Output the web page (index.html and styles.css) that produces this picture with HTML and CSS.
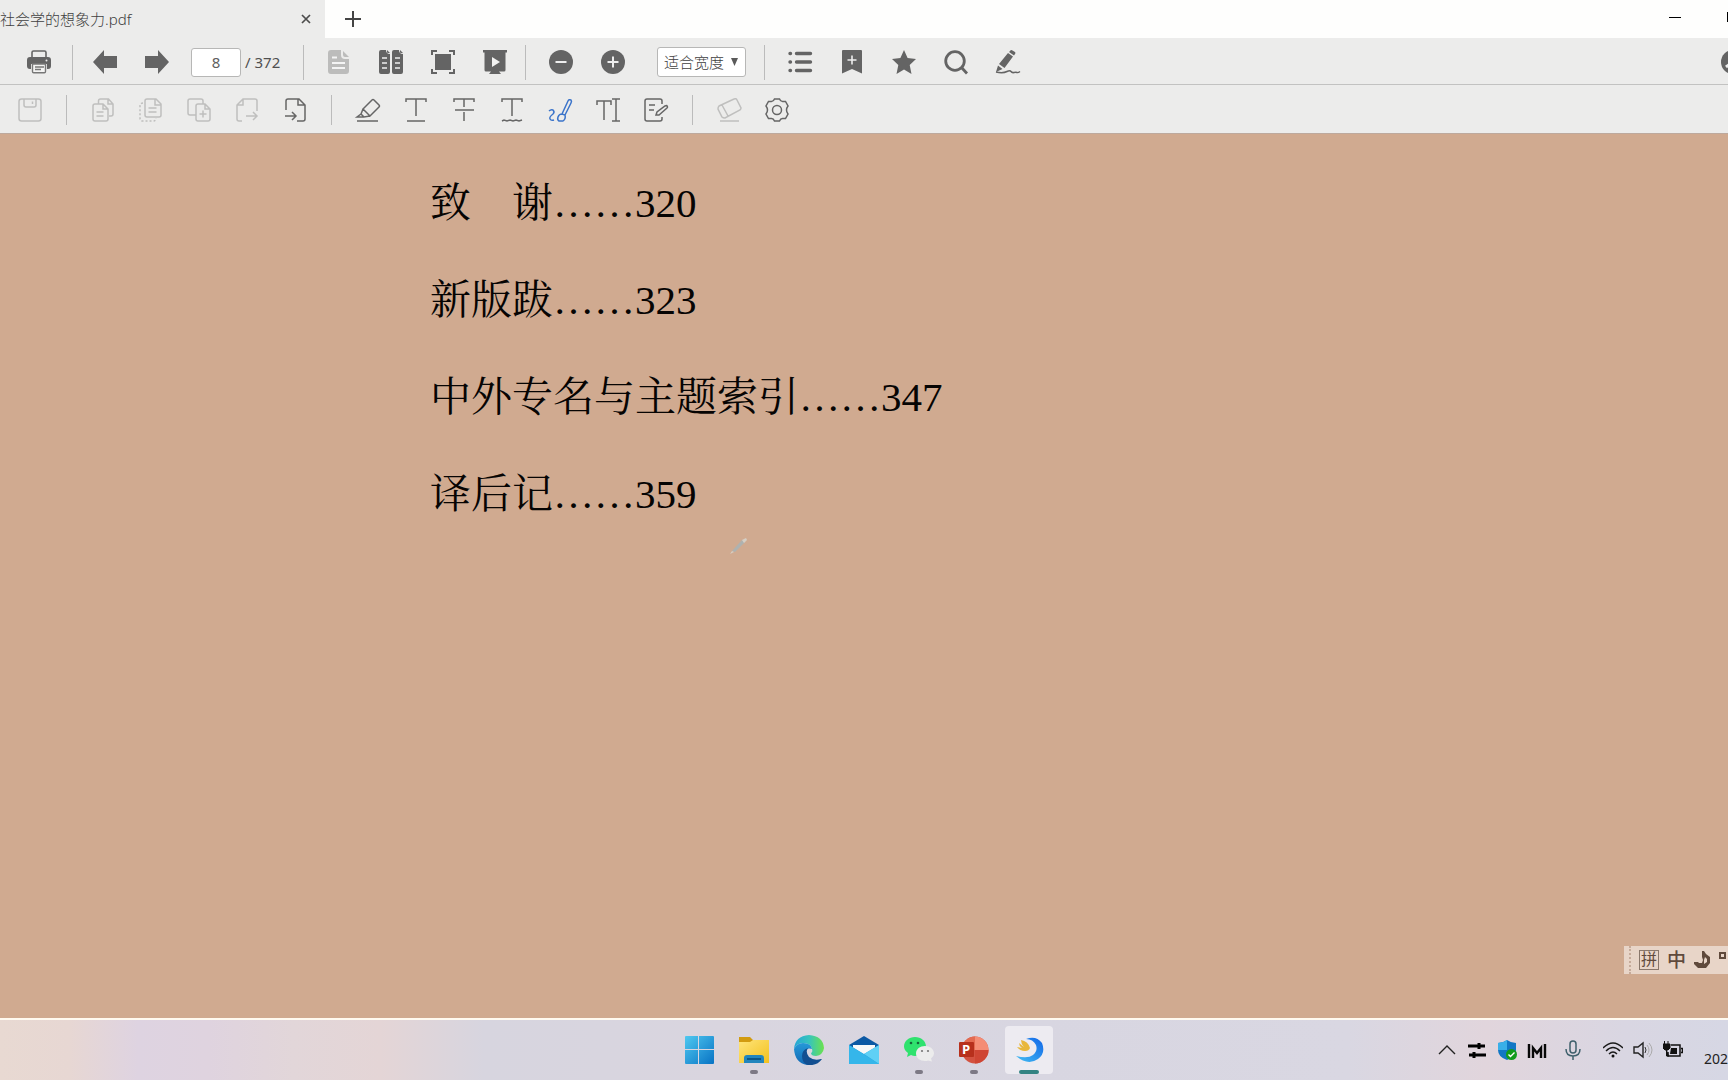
FILE: index.html
```html
<!DOCTYPE html>
<html lang="zh-CN">
<head>
<meta charset="utf-8">
<title>社会学的想象力.pdf</title>
<link rel="stylesheet" href="styles.css">
</head>
<body>
<header class="titlebar">
  <div class="tab">
    <span class="tab-name">社会学的想象力.pdf</span>
    <button class="btn tab-close" aria-label="关闭标签页"><svg width="10" height="10" viewBox="0 0 10 10"><path d="M1 1l8 8M9 1L1 9" stroke="#4c4c4c" stroke-width="1.700"/></svg></button>
  </div>
  <button class="btn new-tab" aria-label="新建标签页"><svg width="16" height="16" viewBox="0 0 16 16"><path d="M8 0v16M0 8h16" stroke="#444" stroke-width="2"/></svg></button>
  <div class="window-controls">
    <button class="btn" aria-label="最小化"><svg width="12" height="12" viewBox="0 0 12 12"><path d="M0 6.500h12" stroke="#000"/></svg></button>
    <button class="btn" aria-label="最大化"><svg width="12" height="12" viewBox="0 0 12 12"><rect x="1" y="2" width="10" height="8" fill="none" stroke="#000" stroke-width="2"/></svg></button>
  </div>
</header>

<nav class="toolbar view-bar" aria-label="视图">
  <div class="group group-print">
    <button class="btn" aria-label="打印"><svg class="icon solid" viewBox="0 0 24 24"><path d="M5 7V2.500Q5 1 6.500 1h11Q19 1 19 2.500V7" fill="none" stroke="#646464" stroke-width="1.600"/><path d="M3 7h18q3 0 3 3v6q0 3-3 3h-1v-5H4v5H3q-3 0-3-3v-6q0-3 3-3z"/><path d="M5.500 14h13v7.500q0 1.200-1.200 1.200H6.700q-1.200 0-1.200-1.200z" fill="#f4f4f3" stroke="#777" stroke-width="1.400"/><path d="M8 17h9M8 19.500h6" stroke="#777" stroke-width="1.400"/><circle cx="19.500" cy="10.500" r="1" fill="#eee"/></svg></button>
  </div>
  <div class="group group-pages">
    <button class="btn" aria-label="上一页"><svg class="icon solid" viewBox="0 0 24 24"><path d="M0 12L11 0v6h13v12H11v6z"/></svg></button>
    <button class="btn" aria-label="下一页"><svg class="icon solid" viewBox="0 0 24 24"><path d="M24 12L13 0v6H0v12h13v6z"/></svg></button>
    <div class="page-count">
      <input class="page-input" id="page" type="text" value="8" aria-label="页码">
      <label for="page">/ 372</label>
    </div>
  </div>
  <div class="group">
    <button class="btn" aria-label="单页"><svg class="icon off" viewBox="0 0 24 24"><path d="M4 0h10v5q0 4 4 4h4v12q0 3-3 3H4q-3 0-3-3V3q0-3 3-3zM16 1l6 6h-4q-2 0-2-2z" fill="#bcbcbb" stroke="none"/><path d="M5 7.500h5M5 13h13M5 18h13" stroke="#f4f4f4" stroke-width="1.800"/></svg></button>
    <button class="btn" aria-label="双页"><svg class="icon solid" viewBox="0 0 24 24"><path d="M2 0h5q0 4 4 4v18q0 2-2 2H2q-2 0-2-2V2Q0 0 2 0zM8 0l3 3H9Q8 3 8 2zM15 0h5q0 4 4 4v18q0 2-2 2h-7q-2 0-2-2V2q0-2 2-2zM21 0l3 3h-2q-1 0-1-1z"/><path d="M3 8h5M3 13h5M3 18h5M16 8h5M16 13h5M16 18h5" stroke="#eee" stroke-width="1.600"/></svg></button>
    <button class="btn" aria-label="适合页面"><svg class="icon solid" viewBox="0 0 24 24"><path d="M4 4h16v16H4z"/><path d="M1 5V1h5M18 1h5v4M23 19v4h-5M6 23H1v-4" fill="none" stroke="#646464" stroke-width="2"/></svg></button>
    <button class="btn" aria-label="放映"><svg class="icon solid" viewBox="0 0 24 24"><path d="M0 0h24v2.500h-1.500V20q0 1.500-1.500 1.500h-5l2 2.500H6l2-2.500H3Q1.500 21.500 1.500 20V2.500H0z"/><path d="M9 7l8 5-8 5z" fill="#f2f2f1"/></svg></button>
  </div>
  <div class="group group-zoom">
    <button class="btn" aria-label="缩小"><svg class="icon solid" viewBox="0 0 24 24"><circle cx="12" cy="12" r="12"/><path d="M6.500 12h11" stroke="#eee" stroke-width="2"/></svg></button>
    <button class="btn" aria-label="放大"><svg class="icon solid" viewBox="0 0 24 24"><circle cx="12" cy="12" r="12"/><path d="M6.500 12h11M12 6.500v11" stroke="#eee" stroke-width="2"/></svg></button>
    <div class="zoom-box">
      <select class="zoom-select" aria-label="缩放"><option>适合宽度</option></select>
      <svg class="zoom-arrow" width="7" height="8" viewBox="0 0 7 8"><path d="M0 0h7L3.500 8z" fill="#5a5a5a"/></svg>
    </div>
  </div>
  <div class="group group-last">
    <button class="btn" aria-label="目录"><svg class="icon solid" viewBox="0 0 24 24"><path d="M8.500 3.500h14M8.500 12h14M8.500 20.500h14M2 3.500h.5M2 12h.5M2 20.500h.5" stroke="#646464" stroke-width="3.400" stroke-linecap="round"/></svg></button>
    <button class="btn" aria-label="书签"><svg class="icon solid" viewBox="0 0 24 24"><path d="M3 0h18q1 0 1 1v22.500L12 19 2 23.500V1q0-1 1-1z"/><path d="M12 5.500v9M7.500 10h9" stroke="#eee" stroke-width="1.600"/></svg></button>
    <button class="btn" aria-label="收藏"><svg class="icon solid" viewBox="0 0 24 24"><path d="M12 0l3.600 8L24 9l-6.300 6L19.500 24 12 19.500 4.500 24l1.800-9L0 9l8.400-1z"/></svg></button>
    <button class="btn" aria-label="搜索"><svg class="icon" viewBox="0 0 24 24" fill="none" stroke="#646464" stroke-width="2.800"><circle cx="11" cy="11" r="9.300"/><path d="M17.500 17.500l5.500 6"/></svg></button>
    <button class="btn" aria-label="签名"><svg class="icon solid" viewBox="0 0 24 24"><path d="M14 1q1-1.500 2.500-.5L19 2q1 1 0 2l-1 1.500-5-3.500zM12 3l5 3.500L8.500 18 3 14zM2 15.500L6.500 19 0 22z"/><path d="M0 22q7 1.500 11-.5 3-1.500 4 0t3 1q2-.5 3 0t3-1" fill="none" stroke="#646464" stroke-width="1.500"/></svg></button>
  </div>
  <button class="btn account" aria-label="账户"><svg class="icon solid" viewBox="0 0 24 24"><circle cx="12" cy="12" r="12"/><path d="M5 17q7-6 14 0" stroke="#eee" stroke-width="3" fill="none"/></svg></button>
</nav>

<nav class="toolbar edit-bar" aria-label="编辑">
  <button class="btn" aria-label="保存"><svg class="icon off" viewBox="0 0 24 24"><path d="M3.500 1h17Q23 1 23 3.500v17q0 2.500-2.500 2.500h-17Q1 23 1 20.500v-17Q1 1 3.500 1zM6 1v6q0 2 2 2h8q2 0 2-2V1M14.500 3.500V6"/></svg></button>
  <span class="sep"></span>
  <button class="btn" aria-label="复制页面"><svg class="icon off" viewBox="0 0 24 24"><path d="M7.500 6V3q0-2 2-2h8L22 6v10q0 2-2 2h-2M17 1v5h5M4 6h8l5 5v10q0 2-2 2H4q-2 0-2-2V8q0-2 2-2zM12 6v5h5M5.500 14h7M5.500 18h7"/></svg></button>
  <button class="btn" aria-label="提取页面"><svg class="icon off" viewBox="0 0 24 24"><path d="M8 1h9l5 5v11q0 2-2 2H8q-2 0-2-2V3q0-2 2-2zM16 1v6h6M9.500 10h8M9.500 14h8"/><path d="M4 5Q1 5 1 8v12q0 3 3 3h10q3 0 3-3" stroke-dasharray="2 2"/></svg></button>
  <button class="btn" aria-label="插入空白页"><svg class="icon off" viewBox="0 0 24 24"><path d="M9 17H3q-2 0-2-2V3q0-2 2-2h11q2 0 2 2v3M11 6h7l5 5v10q0 2-2 2H11q-2 0-2-2V8q0-2 2-2zM18 6v5h5M16 12.500v7M12.500 16h7"/></svg></button>
  <button class="btn" aria-label="导出页面"><svg class="icon off" viewBox="0 0 24 24"><path d="M22 13V3q0-2-2-2H8L2 7v14q0 2 2 2h3M8 1v6H2M11 18h11M18 14l4 4-4 4"/></svg></button>
  <button class="btn" aria-label="导入页面"><svg class="icon line" viewBox="0 0 24 24"><path d="M3 12V3q0-2 2-2h11l6 6v14q0 2-2 2h-6M15 1v6h7M2 18h11M9 14l4 4-4 4"/></svg></button>
  <span class="sep"></span>
  <button class="btn" aria-label="高亮"><svg class="icon line" viewBox="0 0 24 24"><path d="M1 23h21M7 11L16 2q1-1 2 0l5 5q1 1 0 2l-9 9zM7 11l-2 5 3 3 6-1M5 16l-4 3h7"/></svg></button>
  <button class="btn" aria-label="下划线"><svg class="icon line" viewBox="0 0 24 24"><path d="M2 4V1h20v3M12 1v17M3 23h18"/></svg></button>
  <button class="btn" aria-label="删除线"><svg class="icon line" viewBox="0 0 24 24"><path d="M2 4V1h20v3M12 1v8M3 12h19M12 14v9"/></svg></button>
  <button class="btn" aria-label="波浪线"><svg class="icon line" viewBox="0 0 24 24"><path d="M2 4V1h20v3M12 1v17M2 23l2-1 3 1 3-1 3 1 3-1 3 1 3-1"/></svg></button>
  <button class="btn" aria-label="画笔"><svg class="icon blue" viewBox="0 0 24 24"><path d="M1 13q2-2 4-1 2 2 0 4-4 3-3 5 1 2 4 1M14 16L20 3q1-2 3-1 1 1 0 3l-6 12M14 16l3 1q1 4-2 6h-4q-2-1-1-4 1-3 4-3z"/></svg></button>
  <button class="btn" aria-label="文字"><svg class="icon line" viewBox="0 0 24 24"><path d="M1 7V3h14v4M8 3v19M16 1h8M20 1v22M16 23h8"/></svg></button>
  <button class="btn" aria-label="注释"><svg class="icon line" viewBox="0 0 24 24"><path d="M18 6V3q0-2-2-2H3Q1 1 1 3v18q0 2 2 2h13q2 0 2-2v-2M5 7h6M5 12h5M12 17l1-3 8-6q2-1 2 0 1 1 0 2l-8 7z"/></svg></button>
  <span class="sep"></span>
  <button class="btn" aria-label="橡皮擦"><svg class="icon off" viewBox="0 0 24 24"><path d="M3 23h19M2 8L17 1q2-1 3 1l4 8q0 1-1 2L8 20q-2 0-3-1L1 11q0-2 1-3zM5 7l6 11"/></svg></button>
  <button class="btn" aria-label="设置"><svg class="icon line" viewBox="0 0 24 24"><path d="M9.500 1h5q1 2.500 3 2.500t3 0L23 8q-1.500 2-1.500 4t1.500 4l-2.500 4.500h-3q-2 0-3 2.500h-5q-1-2.500-3-2.500h-3L1 16q1.500-2 1.500-4T1 8l2.500-4.500h3q2 0 3-2.500z"/><circle cx="12" cy="12" r="4.500"/></svg></button>
</nav>

<main class="document">
  <ul class="toc">
    <li>致　谢<span class="latin">……320</span></li>
    <li>新版跋<span class="latin">……323</span></li>
    <li>中外专名与主题索引<span class="latin">……347</span></li>
    <li>译后记<span class="latin">……359</span></li>
  </ul>
  <svg class="pen-cursor" width="20" height="20" viewBox="0 0 20 20"><path d="M3 15L13 4l3 2L6 16z" fill="#aeb2b0"/><path d="M13 4l4-2 1 2-3 3zM3 15l-2 3 4-2z" fill="#d5cfc5"/></svg>
  <div class="ime">
    <span class="ime-grip"></span>
    <span class="ime-mode">拼</span>
    <span class="ime-lang">中</span>
    <svg width="17" height="18" viewBox="0 0 17 18"><path d="M8 0h2l2 3 4 3v6l-4 5H4l-4-4v-2h4l1 1h3l1-3-1-3z" fill="#604a3c"/><path d="M11 6l2 2v3l-3 2V9z" fill="#e8d5c8"/></svg>
    <svg width="9" height="18" viewBox="0 0 9 18"><path d="M1 2h5v5H1z" fill="none" stroke="#604a3c" stroke-width="2"/></svg>
  </div>
</main>

<footer class="taskbar">
  <div class="apps">
    <button class="btn app" aria-label="开始"><svg width="30" height="30" viewBox="0 0 30 30"><defs><linearGradient id="win" x1="0" y1="0" x2="1" y2="1"><stop stop-color="#4fc8f0"/><stop offset="1" stop-color="#0873c4"/></linearGradient></defs><path d="M2 1h12v13H1V2q0-1 1-1zM15 1h14q1 0 1 1v12H15zM1 15h13v14H2q-1 0-1-1zM15 15h15v13q0 1-1 1H15z" fill="url(#win)"/></svg></button>
    <button class="btn app running" aria-label="文件资源管理器"><svg width="30" height="30" viewBox="0 0 30 30"><defs><linearGradient id="folder" x1="0" y1="0" x2="1" y2="1"><stop stop-color="#ffe47a"/><stop offset="1" stop-color="#f2c11d"/></linearGradient></defs><path d="M0 2h11l3 3h16v8H0z" fill="#d29b10"/><path d="M0 7h11l3-2h16v23H0z" fill="url(#folder)"/><path d="M5 28v-5q0-3 3-3h14q3 0 3 3v5z" fill="#2285bd"/><path d="M8 24h14" stroke="#0a5688" stroke-width="2"/></svg></button>
    <button class="btn app" aria-label="Edge"><svg width="30" height="30" viewBox="0 0 30 30"><defs><linearGradient id="edgeTop"><stop stop-color="#25a5d7"/><stop offset=".5" stop-color="#36c4bd"/><stop offset="1" stop-color="#6ce24d"/></linearGradient><linearGradient id="edgeLow" x1="0" y1="0" x2="0" y2="1"><stop stop-color="#2599d8"/><stop offset="1" stop-color="#1368b4"/></linearGradient></defs><path d="M0 14Q1 1 15 0q14 1 15 13-1 7-8 8-5 0-5-3 2-1 1-4-1-6-9-6-6 0-9 6z" fill="url(#edgeTop)"/><path d="M0 14q3-6 9-6 8 0 9 6-6-2-6 4 0 6 6 9-1 3-5 3Q1 28 0 14z" fill="url(#edgeLow)"/><path d="M14 13q-3 4 1 9 5 4 12 2h1q-5 7-14 6-6-2-6-9 0-6 6-8z" fill="#124f91"/></svg></button>
    <button class="btn app" aria-label="邮件"><svg width="30" height="30" viewBox="0 0 30 30"><path d="M0 10L15 1l15 9v10H0z" fill="#0c59a4"/><path d="M4 10h22v9H4z" fill="#f8f8f8"/><path d="M0 10l15 9L30 10v19H0z" fill="#2ba5e0"/><path d="M15 19L30 10v19z" fill="#5fd0f5"/><path d="M0 10l30 19H0z" fill="#35b6ea"/></svg></button>
    <button class="btn app running" aria-label="微信"><svg width="30" height="30" viewBox="0 0 30 30"><path d="M11 2c6 0 11 4 11 9.500S17 21 11 21q-2 0-4-1l-4 2 1-4Q0 15 0 11.500C0 6 5 2 11 2z" fill="#2fe26e"/><circle cx="7" cy="8" r="1.300" fill="#15643a"/><circle cx="14" cy="8" r="1.300" fill="#15643a"/><path d="M21 11c5 0 9 3 9 7.500q0 3-3 5l1 3-4-1q-1 .5-3 .5c-5 0-9-3-9-7.500S16 11 21 11z" fill="#ececec"/><circle cx="18" cy="16" r="1.100" fill="#777"/><circle cx="24" cy="16" r="1.100" fill="#777"/></svg></button>
    <button class="btn app running" aria-label="PowerPoint"><svg width="30" height="30" viewBox="0 0 30 30"><circle cx="16" cy="15" r="13.500" fill="#d35240"/><path d="M16 1.500A13.500 13.500 0 0 1 29.500 15H16z" fill="#f58d75"/><path d="M29.500 15A13.500 13.500 0 0 1 16 28.500V15z" fill="#cf4634"/><path d="M16 1.500V15H2.500A13.500 13.500 0 0 1 16 1.500z" fill="#e36a50"/><rect x="0" y="7" width="15" height="15" rx="1" fill="#b7301c"/><text x="3" y="19" class="ppt-letter">P</text></svg></button>
    <button class="btn app running current" aria-label="PDF 阅读器"><svg width="30" height="30" viewBox="0 0 30 30"><defs><linearGradient id="swirl" x1="0" y1="1" x2="1" y2="0"><stop stop-color="#43bdf2"/><stop offset="1" stop-color="#1266e8"/></linearGradient></defs><path d="M12 4Q22 0 28 8q4 10-4 16-10 7-22-3 12 3 17-1 5-4 3-10-3-6-10-6z" fill="url(#swirl)"/><path d="M7 5q7 1 9 8-1 3-5 3-5 0-8-4l5 1q-3-2-3-5l5 4q-3-3-3-7z" fill="#e8b73a"/></svg></button>
  </div>
  <div class="tray">
    <svg class="tray-icon" viewBox="0 0 20 20"><path d="M2 14l8-8 8 8" fill="none" stroke="#222" stroke-width="1.400"/></svg>
    <svg class="tray-icon" viewBox="0 0 20 20"><path d="M1 6h17M2 15h17" stroke="#000" stroke-width="2.800"/><path d="M12 3v6M7 12v6" stroke="#000" stroke-width="3"/></svg>
    <svg class="tray-icon" viewBox="0 0 20 20"><path d="M10 0q4 3 9 3v7q0 7-9 10Q1 17 1 10V3q5 0 9-3z" fill="#1177c5"/><path d="M10 0v10H1V3q5 0 9-3z" fill="#39afe8"/><circle cx="14.500" cy="14.500" r="5.500" fill="#119c1b"/><path d="M11.500 14.500l2 2 4-4" stroke="#fff" stroke-width="1.400" fill="none"/></svg>
    <svg class="tray-icon" viewBox="0 0 20 20"><path d="M2 4v14M18 4v14M6 18V8l4 5 4-5v10" fill="none" stroke="#080808" stroke-width="2.400"/></svg>
    <svg class="tray-icon mic" viewBox="0 0 20 20"><g fill="none" stroke="#3f606c" stroke-width="1.500"><rect x="7" y="1" width="6" height="12" rx="3"/><path d="M3 9q0 7 7 7t7-7M10 16v4"/></g></svg>
    <svg class="tray-icon" viewBox="0 0 20 20"><g fill="none" stroke="#1a1a1a" stroke-width="1.400"><path d="M0 8q10-10 20 0M3 11q7-7 14 0M6 14q4-4 8 0"/></g><circle cx="10" cy="16" r="1.500" fill="#111"/></svg>
    <svg class="tray-icon" viewBox="0 0 20 20"><path d="M1 7h4l5-4v14l-5-4H1z" fill="none" stroke="#222" stroke-width="1.400"/><path d="M12 7q2 3 0 6" fill="none" stroke="#333"/><path d="M14 5q4 5 0 10M16 3q6 7 0 14" fill="none" stroke="#aaa"/></svg>
    <svg class="tray-icon" viewBox="0 0 20 20"><path d="M8 5h9v11H5v-4M18 8.500h1.500v4H18" fill="none" stroke="#111" stroke-width="1.500"/><path d="M8 8h6v6H7z" fill="#111"/><path d="M0 4h7v4l-2 2H2L0 8zM1.500 1v3M5 1v3M3.500 9v7H6" stroke="#111" fill="#111"/></svg>
    <span class="date">202</span>
  </div>
</footer>
</body>
</html>
```
FILE: styles.css
```css
* {
  box-sizing: border-box;
}

body {
  margin: 0;
  min-height: 100vh;
  display: flex;
  flex-direction: column;
  overflow-x: hidden;
  background: #d0aa90;
  color: #505050;
  font-family: "Noto Sans", "Noto Sans CJK SC", sans-serif;
  font-size: 15px;
}

svg {
  display: block;
  flex: none;
}

.btn {
  display: flex;
  align-items: center;
  justify-content: center;
  flex: none;
  padding: 0;
  border: 0;
  background: none;
}

/* Tabs and window controls */

.titlebar {
  display: flex;
  height: 38px;
  overflow: hidden;
  background: #fefefd;
}

.tab {
  display: flex;
  align-items: center;
  justify-content: space-between;
  width: 325px;
  padding-right: 14px;
  background: #ececeb;
}

.tab-name {
  line-height: 36px;
  white-space: nowrap;
  color: #404040;
  font-weight: 300;
}

.new-tab {
  width: 56px;
}

.window-controls {
  display: flex;
  align-items: center;
  gap: 46px;
  height: 34px;
  margin-left: auto;
  margin-right: -11px;
}

/* Toolbars */

.toolbar {
  display: flex;
  align-items: center;
  overflow: hidden;
  background: #ececeb;
}

.view-bar {
  height: 47px;
  padding-top: 2px;
  border-bottom: 1px solid #c2c2c1;
}

.edit-bar {
  gap: 24px;
  height: 49px;
  padding: 2px 0 0 18px;
  border-bottom: 1px solid #bda99d;
}

.icon {
  width: 24px;
  height: 24px;
  overflow: visible;
}

.solid {
  fill: #646464;
}

.line,
.off,
.blue {
  fill: none;
  stroke: #666;
  stroke-width: 1.5;
}

.off {
  stroke: #bfbfbe;
}

.blue {
  stroke: #3b74ca;
}

.group {
  display: flex;
  align-items: center;
  gap: 28px;
  height: 35px;
  padding: 0 18px 0 23px;
  border-right: 1px solid #bbb;
}

.group-print {
  padding: 0 21px 0 27px;
}

.group-pages {
  padding: 0 20px;
}

.group-last {
  border-right: 0;
}

.sep {
  width: 1px;
  height: 30px;
  background: #bbb;
}

.page-count {
  display: flex;
  align-items: center;
  gap: 4px;
  width: 92px;
  margin-left: -6px;
  white-space: nowrap;
}

.page-input {
  width: 50px;
  height: 29px;
  padding: 0;
  border: 1px solid #b7b7b6;
  border-radius: 3px;
  background: #fff;
  color: #606060;
  font: inherit;
  text-align: center;
}

.zoom-box {
  display: grid;
  align-items: center;
  margin-left: 4px;
}

.zoom-select,
.zoom-arrow {
  grid-area: 1 / 1;
}

.zoom-select {
  width: 89px;
  height: 30px;
  padding: 0 0 0 6px;
  appearance: none;
  border: 1px solid #b7b7b6;
  border-radius: 3px;
  background: #fff;
  color: #404040;
  font: inherit;
  font-weight: 300;
}

.zoom-arrow {
  justify-self: end;
  margin-right: 8px;
  pointer-events: none;
}

.account {
  margin-left: auto;
  margin-right: -17px;
}

/* Document */

.document {
  position: relative;
  flex: 1;
  overflow: hidden;
  padding: 17px 0 0 25%;
  border-bottom: 2px solid #fffaf0;
}

.toc {
  margin: 0 0 0 -2px;
  padding: 0;
  list-style: none;
  color: #060403;
  font-family: "Noto Serif CJK SC", "Noto Sans CJK SC", serif;
  font-size: 41px;
  font-weight: 400;
  line-height: 97px;
  white-space: nowrap;
}

.latin {
  font-family: Georgia, "Liberation Serif", serif;
  font-variant-numeric: oldstyle-nums;
  line-height: 1;
}

.pen-cursor {
  position: absolute;
  left: 729px;
  top: 402px;
}

.ime {
  position: absolute;
  right: 0;
  bottom: 44px;
  display: flex;
  align-items: center;
  gap: 8px;
  width: 104px;
  height: 28px;
  padding-left: 5px;
  overflow: hidden;
  background: #e8d5c8;
  color: #604a3c;
}

.ime-grip {
  flex: none;
  width: 2px;
  height: 28px;
  border-left: 2px dotted #c6ab9a;
}

.ime-mode {
  flex: none;
  width: 20px;
  height: 20px;
  border: 1px solid #89776b;
  font-size: 16px;
  line-height: 17px;
  text-align: center;
}

.ime-lang {
  font-size: 19px;
  font-weight: 500;
  line-height: 28px;
}

/* Taskbar */

.taskbar {
  display: grid;
  grid-template-columns: 1fr auto 1fr;
  align-items: center;
  height: 60px;
  background: linear-gradient(90deg, #e8d9d2 0, #e7d7d3 4%, #ded3e1 8%, #dfd3df 12%, #e2d6d9 17%, #e4d5d6 22%, #d7d5df 28%, #d9d5df 42%, #d8d6e1 60%, #d9d7e2 78%, #e1d5dc 86%, #d9d6e2 94%, #d6d7e4 100%);
}

.apps {
  grid-column: 2;
  display: flex;
  gap: 7px;
}

.app {
  position: relative;
  width: 48px;
  height: 48px;
  border-radius: 4px;
}

.current {
  background: #edebf1;
}

.running::after {
  content: "";
  position: absolute;
  left: 20px;
  bottom: 0;
  width: 8px;
  height: 4px;
  border-radius: 2px;
  background: #7d7985;
}

.current::after {
  left: 14px;
  width: 20px;
  background: #338382;
}

.ppt-letter {
  fill: #fff;
  font-family: "Open Sans", sans-serif;
  font-size: 13px;
  font-weight: 700;
}

.tray {
  display: flex;
  align-items: center;
  justify-content: flex-end;
  gap: 10px;
  overflow: hidden;
  color: #222;
}

.tray-icon {
  width: 20px;
  height: 20px;
}

.mic {
  margin: 0 10px 0 6px;
}

.date {
  margin: 18px 0 0 11px;
  font-size: 14px;
  line-height: 24px;
}
```
